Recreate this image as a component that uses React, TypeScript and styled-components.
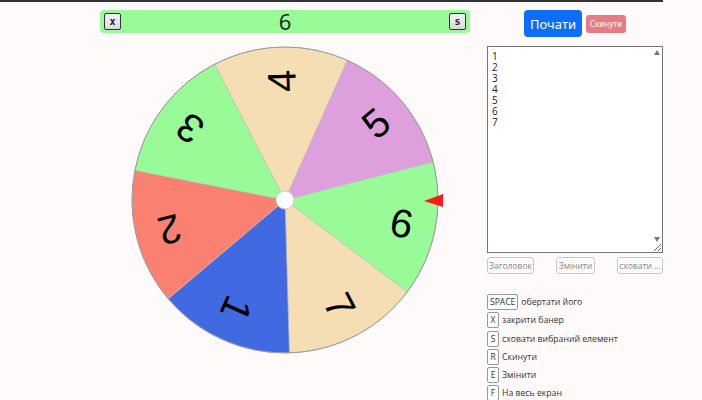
import React from "react";
import styled, { createGlobalStyle } from "styled-components";

const Global = createGlobalStyle`
  html, body { margin: 0; padding: 0; background: #fffafa; }
  body { font-family: "Open Sans", "Liberation Sans", sans-serif; color: #333; }
`;

const Page = styled.div`
  width: 663px;
  border-top: 2px solid #333;
  display: flex;
  align-items: flex-start;
`;

const LeftCol = styled.div`
  width: 370px;
  padding-left: 100px;
  display: flex;
  flex-direction: column;
  align-items: center;
`;

const Banner = styled.div`
  margin-top: 8px;
  width: 100%;
  height: 23px;
  box-sizing: border-box;
  padding: 0 4px;
  background: #98fb98;
  border-radius: 4px;
  display: flex;
  align-items: center;
  justify-content: space-between;
`;

const BannerText = styled.span`
  font-size: 22px;
  line-height: 23px;
  color: #222;
`;

const KeyBtn = styled.button`
  width: 17px;
  height: 17px;
  padding: 0;
  box-sizing: border-box;
  border: 1px solid #333;
  border-radius: 2px;
  background: linear-gradient(#f4f4f8, #d8d8de);
  font: bold 10px "DejaVu Sans Mono", monospace;
  color: #222;
`;

const WheelSvg = styled.svg`
  margin-top: 7px;
  display: block;
`;

const RightCol = styled.div`
  margin-left: 17px;
  width: 176px;
  display: flex;
  flex-direction: column;
`;

const TopButtons = styled.div`
  margin-top: 8px;
  height: 27px;
  display: flex;
  align-items: center;
  justify-content: center;
  gap: 4px;
`;

const StartBtn = styled.button`
  height: 27px;
  width: 58px;
  padding: 0;
  border: none;
  border-radius: 4px;
  background: #0d6efd;
  color: #fff;
  font: 13px "Noto Sans", sans-serif;
`;

const ResetBtn = styled.button`
  height: 18px;
  width: 40px;
  padding: 0;
  border: none;
  border-radius: 3px;
  background: #e77a84;
  color: #fff;
  font: 8px "Noto Sans", sans-serif;
`;

const AreaWrap = styled.div`
  position: relative;
  margin-top: 9px;
  height: 207px;
`;

const ItemsArea = styled.textarea`
  display: block;
  width: 176px;
  height: 207px;
  box-sizing: border-box;
  border: 1px solid #767676;
  padding: 4px 16px 4px 4px;
  background: #fff;
  font: 10px/11px "Open Sans", sans-serif;
  color: #222;
  resize: both;
`;

const ScrollArrow = styled.span<{ $down?: boolean }>`
  position: absolute;
  right: 3px;
  width: 0;
  height: 0;
  border-left: 3.5px solid transparent;
  border-right: 3.5px solid transparent;
  ${(p) =>
    p.$down
      ? "bottom: 11px; border-top: 5px solid #777;"
      : "top: 4px; border-bottom: 5px solid #777;"}
  pointer-events: none;
`;

const ToolRow = styled.div`
  margin-top: 4px;
  display: flex;
  justify-content: space-between;
`;

const ToolBtn = styled.button<{ $w: number }>`
  width: ${(p) => p.$w}px;
  height: 17px;
  padding: 0;
  border: 1px solid #c8c8c8;
  border-radius: 3px;
  background: #fbfbfb;
  color: #888;
  font: 8.5px "Open Sans", sans-serif;
`;

const Shortcuts = styled.ul`
  list-style: none;
  margin: 20px 0 0;
  padding: 0;
  display: flex;
  flex-direction: column;
  gap: 2.3px;
`;

const ShortcutRow = styled.li`
  display: flex;
  align-items: center;
  gap: 3px;
  height: 16px;
  font-size: 8.7px;
  color: #333;
`;

const Kbd = styled.kbd`
  height: 16px;
  min-width: 12px;
  box-sizing: border-box;
  padding: 0 2px;
  border: 1px solid #999;
  border-radius: 2px;
  background: #fff;
  font: 8.5px/14px "Open Sans", sans-serif;
  text-align: center;
  color: #333;
`;

const CX = 160;
const CY = 160;
const R = 153;
const START = -14.5;
const STEP = 360 / 7;

const segments = [
  { label: "6", color: "#98fb98" },
  { label: "7", color: "#f5deb3" },
  { label: "1", color: "#4169e1" },
  { label: "2", color: "#fa8072" },
  { label: "3", color: "#98fb98" },
  { label: "4", color: "#f5deb3" },
  { label: "5", color: "#dda0dd" },
];

const pt = (deg: number, r: number) => {
  const a = (deg * Math.PI) / 180;
  return [CX + r * Math.cos(a), CY + r * Math.sin(a)];
};

function Wheel() {
  return (
    <WheelSvg width={320} height={320} viewBox="0 0 320 320">
      {segments.map((s, i) => {
        const a0 = START + i * STEP;
        const a1 = a0 + STEP;
        const [x0, y0] = pt(a0, R);
        const [x1, y1] = pt(a1, R);
        const mid = a0 + STEP / 2;
        const [tx, ty] = pt(mid, 119);
        return (
          <g key={i}>
            <path
              d={`M${CX} ${CY} L${x0} ${y0} A${R} ${R} 0 0 1 ${x1} ${y1} Z`}
              fill={s.color}
              stroke="#bbb"
              strokeWidth={0.6}
            />
            <text
              x={tx}
              y={ty}
              fontFamily="Liberation Sans, Arial, sans-serif"
              fontSize={40}
              textAnchor="middle"
              dominantBaseline="central"
              fill="#000"
              transform={`rotate(${mid} ${tx} ${ty})`}
            >
              {s.label}
            </text>
          </g>
        );
      })}
      <circle cx={CX} cy={CY} r={R} fill="none" stroke="#999" strokeWidth={1} />
      <circle cx={CX} cy={CY} r={9} fill="#fff" stroke="#ccc" strokeWidth={1} />
      <polygon points="299,161 318,154 318,167" fill="#ff1a1a" />
    </WheelSvg>
  );
}

const shortcuts = [
  ["SPACE", "обертати його"],
  ["X", "закрити банер"],
  ["S", "сховати вибраний елемент"],
  ["R", "Скинути"],
  ["E", "Змінити"],
  ["F", "На весь екран"],
];

export default function App() {
  return (
    <Page>
      <Global />
      <LeftCol>
        <Banner>
          <KeyBtn>x</KeyBtn>
          <BannerText>6</BannerText>
          <KeyBtn>s</KeyBtn>
        </Banner>
        <Wheel />
      </LeftCol>
      <RightCol>
        <TopButtons>
          <StartBtn>Почати</StartBtn>
          <ResetBtn>Скинути</ResetBtn>
        </TopButtons>
        <AreaWrap>
          <ItemsArea defaultValue={"1\n2\n3\n4\n5\n6\n7"} />
          <ScrollArrow />
          <ScrollArrow $down />
        </AreaWrap>
        <ToolRow>
          <ToolBtn $w={47}>Заголовок</ToolBtn>
          <ToolBtn $w={39}>Змінити</ToolBtn>
          <ToolBtn $w={46}>сховати ...</ToolBtn>
        </ToolRow>
        <Shortcuts>
          {shortcuts.map(([k, t]) => (
            <ShortcutRow key={k}>
              <Kbd>{k}</Kbd>
              {t}
            </ShortcutRow>
          ))}
        </Shortcuts>
      </RightCol>
    </Page>
  );
}
